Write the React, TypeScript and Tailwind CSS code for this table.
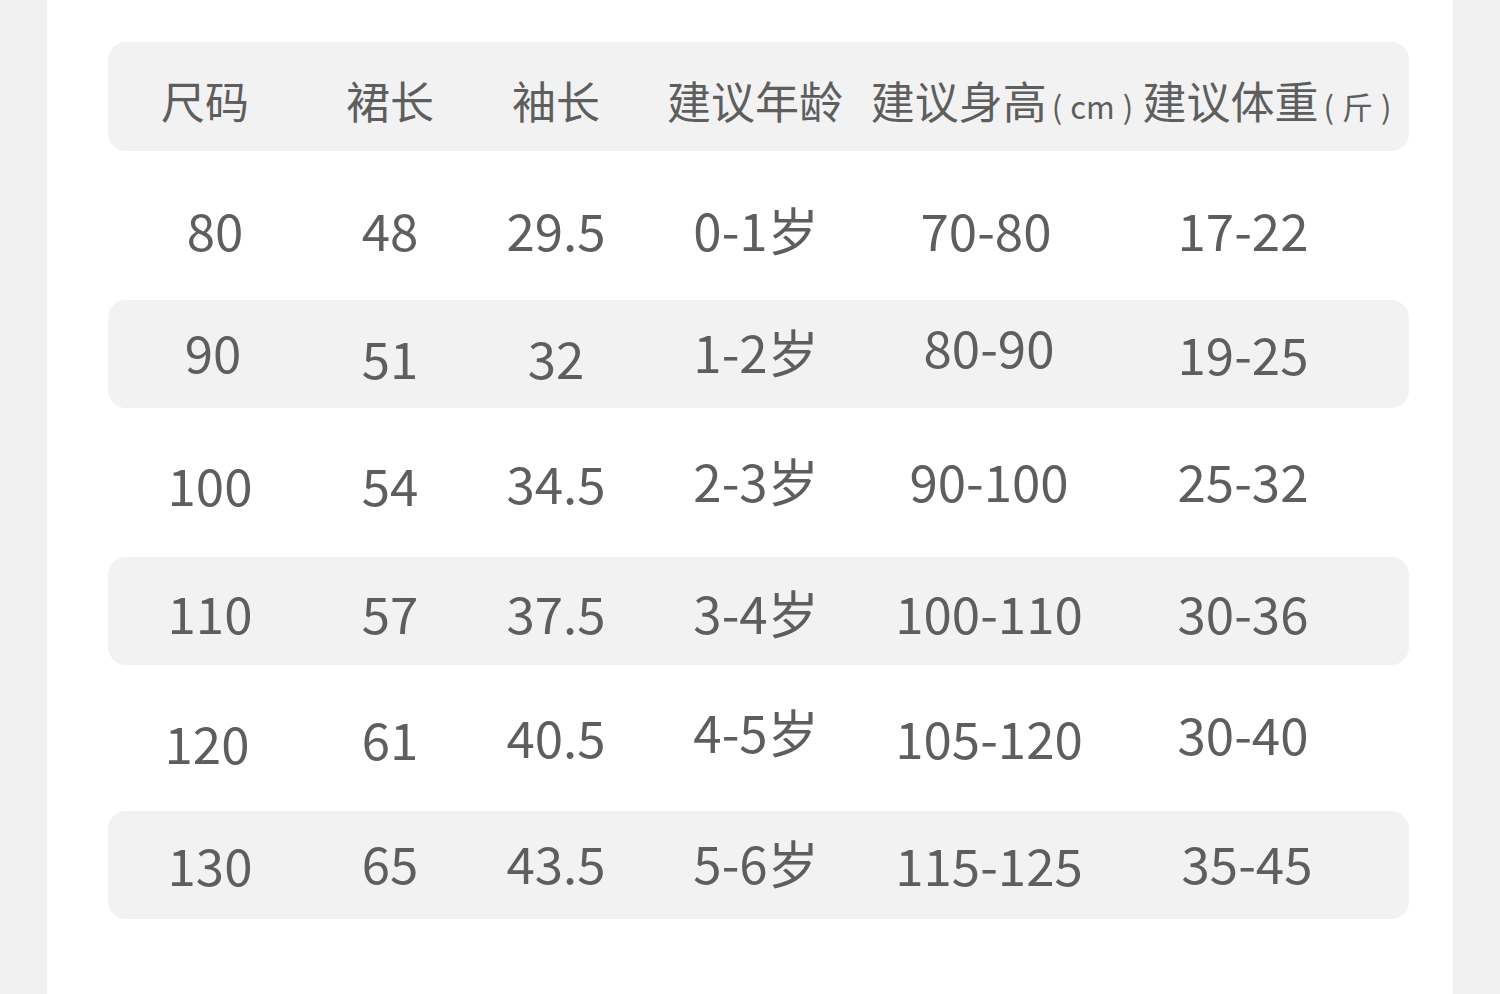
const font = { fontFamily: '"Noto Sans CJK SC", "Noto Sans", sans-serif' };

type Cell = { t: string; c?: string };

const rows: { cells: Cell[]; shaded: boolean; h: string; dy: string }[] = [
  {
    shaded: false,
    h: "h-[149px]",
    dy: "translate-y-[4px]",
    cells: [{ t: "80", c: "translate-x-[5px]" }, { t: "48" }, { t: "29.5" }, { t: "0-1岁" }, { t: "70-80", c: "-translate-x-[3px]" }, { t: "17-22" }],
  },
  {
    shaded: true,
    h: "h-[108px]",
    dy: "-translate-y-[3px]",
    cells: [
      { t: "90", c: "translate-x-[3px]" },
      { t: "51", c: "translate-y-[6px]" },
      { t: "32", c: "translate-y-[6px]" },
      { t: "1-2岁" },
      { t: "80-90", c: "-translate-y-[5px]" },
      { t: "19-25", c: "translate-y-[2px]" },
    ],
  },
  {
    shaded: false,
    h: "h-[149px]",
    dy: "-translate-y-[2px]",
    cells: [
      { t: "100", c: "translate-y-[4px]" },
      { t: "54", c: "translate-y-[4px]" },
      { t: "34.5", c: "translate-y-[2px]" },
      { t: "2-3岁" },
      { t: "90-100" },
      { t: "25-32" },
    ],
  },
  {
    shaded: true,
    h: "h-[108px]",
    dy: "translate-y-[1px]",
    cells: [{ t: "110" }, { t: "57" }, { t: "37.5" }, { t: "3-4岁" }, { t: "100-110" }, { t: "30-36" }],
  },
  {
    shaded: false,
    h: "h-[146px]",
    dy: "-translate-y-[2px]",
    cells: [
      { t: "120", c: "translate-y-[6px] -translate-x-[3px]" },
      { t: "61", c: "translate-y-[2px]" },
      { t: "40.5" },
      { t: "4-5岁", c: "-translate-y-[5px]" },
      { t: "105-120", c: "translate-y-[1px]" },
      { t: "30-40", c: "-translate-y-[3px]" },
    ],
  },
  {
    shaded: true,
    h: "h-[108px]",
    dy: "-translate-y-[3px]",
    cells: [
      { t: "130", c: "translate-y-[2px]" },
      { t: "65" },
      { t: "43.5" },
      { t: "5-6岁" },
      { t: "115-125", c: "translate-y-[2px]" },
      { t: "35-45", c: "translate-x-[4px]" },
    ],
  },
];

function Unit({ u }: { u: string }) {
  return (
    <span className="text-[31px] ml-[5px]">
      (<span className="mx-[8px]">{u}</span>)
    </span>
  );
}

function Header() {
  return (
    <div className="h-[109px] rounded-[18px] bg-[#f2f2f2] grid grid-cols-[194px_176px_156px_242px_252px_278px] items-center text-[44px] text-[#5e5e5e] leading-none">
      <div className="flex justify-center translate-y-[3px] whitespace-nowrap">尺码</div>
      <div className="flex justify-center translate-y-[3px] whitespace-nowrap">裙长</div>
      <div className="flex justify-center translate-y-[3px] whitespace-nowrap">袖长</div>
      <div className="flex justify-center translate-y-[3px] whitespace-nowrap">建议年龄</div>
      <div className="flex justify-center items-baseline translate-y-[3px] whitespace-nowrap">
        建议身高<Unit u="cm" />
      </div>
      <div className="flex justify-center items-baseline translate-y-[3px] whitespace-nowrap">
        建议体重<Unit u="斤" />
      </div>
    </div>
  );
}

export default function App() {
  return (
    <div className="flex w-full h-[994px] bg-[#f0f0f0]" style={font}>
      <div className="w-[47px] shrink-0" />
      <div className="flex-1 bg-white pt-[42px] pl-[61px]">
        <div className="w-[1301px]">
          <Header />
          {rows.map((row, i) => (
            <div
              key={i}
              className={`${row.h} ${row.shaded ? "bg-[#f2f2f2] rounded-[18px]" : ""} grid grid-cols-[204px_156px_176px_224px_242px_266px] items-center text-[51px] text-[#5e5e5e] leading-none`}
            >
              {row.cells.map((cell, j) => (
                <div key={j} className={`flex justify-center whitespace-nowrap ${row.dy}`}>
                  <span className={cell.c}>{cell.t}</span>
                </div>
              ))}
            </div>
          ))}
        </div>
      </div>
      <div className="w-[47px] shrink-0" />
    </div>
  );
}
